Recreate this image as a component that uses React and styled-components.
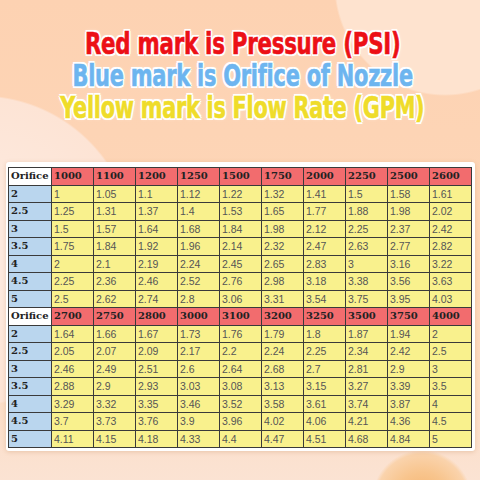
import React from "react";
import styled, { createGlobalStyle } from "styled-components";

const Global = createGlobalStyle`
  html, body { margin: 0; padding: 0; }
  body { width: 480px; height: 480px; overflow: hidden; }
`;

const Page = styled.div`
  width: 480px;
  height: 480px;
  box-sizing: border-box;
  overflow: hidden;
  display: flex;
  flex-direction: column;
  align-items: center;
  padding-top: 28px;
  background:
    radial-gradient(circle at 445px -15px, #fee3cf 0 109px, rgba(254, 227, 207, 0) 111px),
    radial-gradient(circle at -20px 250px, #fdeadf 0 40px, #fde4d5 153px, rgba(253, 228, 213, 0) 155px),
    radial-gradient(circle at 422px 500px, #f5b26c 0, #f8c58e 28px, #fad3ac 46px, rgba(250, 211, 172, 0) 50px),
    linear-gradient(180deg, #fdd2b2 0%, #fdd6b8 55%, #fcdcc4 80%, #fbe3d3 100%);
`;

const Titles = styled.div`
  display: flex;
  flex-direction: column;
  align-items: center;
  margin-left: 5px;
`;

const Headline = styled.div`
  font-family: "DejaVu Sans Condensed", "DejaVu Sans", sans-serif;
  font-weight: 700;
  font-size: 30px;
  line-height: 32px;
  letter-spacing: -0.3px;
  white-space: nowrap;
  color: ${(p) => p.$color};
  -webkit-text-stroke: 0.6px ${(p) => p.$color};
  transform: scaleX(${(p) => p.$sx});
  text-shadow:
    2.2px 0 0 #fff, -2.2px 0 0 #fff, 0 2.2px 0 #fff, 0 -2.2px 0 #fff,
    1.6px 1.6px 0 #fff, -1.6px 1.6px 0 #fff, 1.6px -1.6px 0 #fff, -1.6px -1.6px 0 #fff,
    0 0 5px rgba(255, 255, 255, 0.8);
`;

const Card = styled.div`
  margin-top: 38px;
  width: 469px;
  box-sizing: border-box;
  padding: 5px 3px 3px 2.5px;
  background: #fff;
  border-radius: 3px;
  box-shadow: 0 1px 4px rgba(180, 110, 60, 0.25);
`;

const Table = styled.table`
  border-collapse: collapse;
  table-layout: fixed;
  width: 464px;
  height: 281px;
`;

const Cell = styled.td`
  border: 1px solid #3a3a3a;
  padding: 0 0 0 2px;
  height: 15px;
  overflow: hidden;
  white-space: nowrap;
  vertical-align: middle;
  background: ${(p) =>
    p.$kind === "head" ? "#f26c6e" : p.$kind === "orifice" ? "#bad6ee" : p.$kind === "label" ? "#ffffff" : "#f9f18d"};
  font-family: ${(p) =>
    p.$kind === "value" ? `"Liberation Sans", Arial, sans-serif` : `"DejaVu Serif", "Liberation Serif", serif`};
  font-weight: ${(p) => (p.$kind === "value" ? 400 : 700)};
  font-size: ${(p) => (p.$kind === "value" ? "10.5px" : "10px")};
  color: ${(p) => (p.$kind === "value" ? "#555" : "#222")};
  line-height: 12px;
`;

const Col = styled.col`
  width: ${(p) => p.$w}px;
`;

const block1 = {
  pressures: ["1000", "1100", "1200", "1250", "1500", "1750", "2000", "2250", "2500", "2600"],
  rows: [
    ["2", "1", "1.05", "1.1", "1.12", "1.22", "1.32", "1.41", "1.5", "1.58", "1.61"],
    ["2.5", "1.25", "1.31", "1.37", "1.4", "1.53", "1.65", "1.77", "1.88", "1.98", "2.02"],
    ["3", "1.5", "1.57", "1.64", "1.68", "1.84", "1.98", "2.12", "2.25", "2.37", "2.42"],
    ["3.5", "1.75", "1.84", "1.92", "1.96", "2.14", "2.32", "2.47", "2.63", "2.77", "2.82"],
    ["4", "2", "2.1", "2.19", "2.24", "2.45", "2.65", "2.83", "3", "3.16", "3.22"],
    ["4.5", "2.25", "2.36", "2.46", "2.52", "2.76", "2.98", "3.18", "3.38", "3.56", "3.63"],
    ["5", "2.5", "2.62", "2.74", "2.8", "3.06", "3.31", "3.54", "3.75", "3.95", "4.03"],
  ],
};

const block2 = {
  pressures: ["2700", "2750", "2800", "3000", "3100", "3200", "3250", "3500", "3750", "4000"],
  rows: [
    ["2", "1.64", "1.66", "1.67", "1.73", "1.76", "1.79", "1.8", "1.87", "1.94", "2"],
    ["2.5", "2.05", "2.07", "2.09", "2.17", "2.2", "2.24", "2.25", "2.34", "2.42", "2.5"],
    ["3", "2.46", "2.49", "2.51", "2.6", "2.64", "2.68", "2.7", "2.81", "2.9", "3"],
    ["3.5", "2.88", "2.9", "2.93", "3.03", "3.08", "3.13", "3.15", "3.27", "3.39", "3.5"],
    ["4", "3.29", "3.32", "3.35", "3.46", "3.52", "3.58", "3.61", "3.74", "3.87", "4"],
    ["4.5", "3.7", "3.73", "3.76", "3.9", "3.96", "4.02", "4.06", "4.21", "4.36", "4.5"],
    ["5", "4.11", "4.15", "4.18", "4.33", "4.4", "4.47", "4.51", "4.68", "4.84", "5"],
  ],
};

function Block({ data }) {
  return (
    <>
      <tr>
        <Cell $kind="label">Orifice</Cell>
        {data.pressures.map((p) => (
          <Cell key={p} $kind="head">{p}</Cell>
        ))}
      </tr>
      {data.rows.map((r) => (
        <tr key={r[0]}>
          <Cell $kind="orifice">{r[0]}</Cell>
          {r.slice(1).map((v, i) => (
            <Cell key={i} $kind="value">{v}</Cell>
          ))}
        </tr>
      ))}
    </>
  );
}

export default function App() {
  return (
    <>
      <Global />
      <Page>
        <Titles>
          <Headline $color="#ec1016" $sx={0.79}>Red mark is Pressure (PSI)</Headline>
          <Headline $color="#6db5ef" $sx={0.775}>Blue mark is Orifice of Nozzle</Headline>
          <Headline $color="#efdc2a" $sx={0.77}>Yellow mark is Flow Rate (GPM)</Headline>
        </Titles>
        <Card>
          <Table>
            <colgroup>
              <Col $w={43} />
              {Array.from({ length: 10 }).map((_, i) => (
                <Col key={i} $w={42} />
              ))}
            </colgroup>
            <tbody>
              <Block data={block1} />
              <Block data={block2} />
            </tbody>
          </Table>
        </Card>
      </Page>
    </>
  );
}
